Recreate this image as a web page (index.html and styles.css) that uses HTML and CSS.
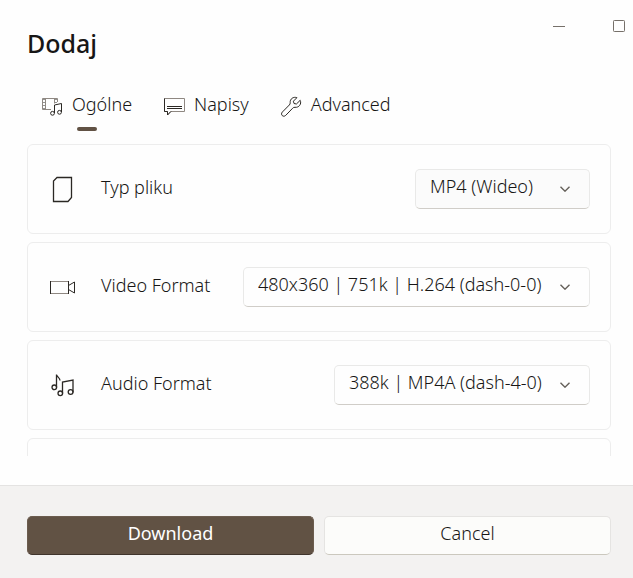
FILE: index.html
```html
<!DOCTYPE html>
<html lang="pl">
<head>
<meta charset="utf-8">
<meta name="viewport" content="width=device-width, initial-scale=1">
<title>Dodaj</title>
<link rel="stylesheet" href="styles.css">
</head>
<body>
<header class="header">
  <h1 class="title">Dodaj</h1>
  <div class="window-controls">
    <button class="window-button" type="button" aria-label="Minimize">
      <svg width="12" height="12" viewBox="0 0 12 12"><path d="M0 6.5h12"/></svg>
    </button>
    <button class="window-button" type="button" aria-label="Maximize">
      <svg width="12" height="12" viewBox="0 0 12 12"><rect x=".5" y=".5" width="11" height="11" rx=".8"/></svg>
    </button>
  </div>
</header>
<nav class="tabs" role="tablist">
  <button class="tab tab-active" type="button" role="tab" aria-selected="true">
    <svg class="icon" width="22" height="20" viewBox="0 0 22 20">
      <path class="soft" d="M9 13.500H.5v-11h15V6M3.500 2.500v11M12.500 2.500v5"/>
      <path class="dots" d="M2 3v10M14 3v4"/>
      <path d="M12.500 17V9l7-1.500V16"/>
      <circle cx="10.500" cy="17.300" r="1.900"/><circle cx="17.500" cy="16.300" r="1.900"/>
    </svg>
    <span>Ogólne</span>
  </button>
  <button class="tab" type="button" role="tab" aria-selected="false">
    <svg class="icon" width="22" height="20" viewBox="0 0 22 20">
      <path class="soft" d="M.5 2.500h20v13h-14l-3 3.500v-3.500h-3z"/>
      <path d="M.5 2.500v13h3V19l3.500-3.500"/>
      <path d="M3 10.500h15M3 12.500h15"/>
    </svg>
    <span>Napisy</span>
  </button>
  <button class="tab" type="button" role="tab" aria-selected="false">
    <svg class="icon" width="22" height="22" viewBox="0 0 22 22">
      <path d="M15.900 1.700C12.500.3 8.700 3 9.200 6.700c.1 1-.2 1.600-.9 2.300L1.500 15.900c-2.600 2.500.6 5.900 3.200 3.500l7-7.200c.6-.7 1.300-1 2.300-.9 4 .5 6.800-3.400 5.200-7l-3.800 3.700-2.400-.5-.6-2.300z"/>
    </svg>
    <span>Advanced</span>
  </button>
</nav>
<main class="settings">
  <section class="card">
    <svg class="card-icon" width="26" height="28" viewBox="0 0 26 28"><path class="firm" d="M7 2.500h14.500v20l-3.500 4H3.500V6z"/></svg>
    <label class="card-label" for="file-type">Typ pliku</label>
    <span class="picker">
      <select class="picker-select picker-primary" id="file-type"><option>MP4 (Wideo)</option></select>
      <svg class="chevron" width="10" height="6" viewBox="0 0 10 6"><path d="M.5.7 5 5.200 9.500.7"/></svg>
    </span>
  </section>
  <section class="card">
    <svg class="card-icon" width="26" height="28" viewBox="0 0 26 28"><path class="soft" d="M.5 8.500h18v12H.5z"/><path d="M.5 8v13M18.500 8v13M18.500 12.500 24.500 9v11l-6-3.500"/></svg>
    <label class="card-label" for="video-format">Video Format</label>
    <span class="picker">
      <select class="picker-select" id="video-format"><option>480x360 | 751k | H.264 (dash-0-0)</option></select>
      <svg class="chevron" width="10" height="6" viewBox="0 0 10 6"><path d="M.5.7 5 5.200 9.500.7"/></svg>
    </span>
  </section>
  <section class="card">
    <svg class="card-icon" width="26" height="28" viewBox="0 0 26 28">
      <path class="firm" d="M6.500 16.500v-13c.3 2.500 3.500 3 3.500 6M12.500 22.500V11l10.500-2v12.500"/>
      <circle class="firm" cx="4.300" cy="16.300" r="2.300"/><circle class="firm" cx="10.300" cy="22.300" r="2.300"/><circle class="firm" cx="20.600" cy="21" r="2.400"/>
    </svg>
    <label class="card-label" for="audio-format">Audio Format</label>
    <span class="picker">
      <select class="picker-select" id="audio-format"><option>388k | MP4A (dash-4-0)</option></select>
      <svg class="chevron" width="10" height="6" viewBox="0 0 10 6"><path d="M.5.7 5 5.200 9.500.7"/></svg>
    </span>
  </section>
  <section class="card"></section>
</main>
<footer class="footer">
  <button class="action action-primary" type="button">Download</button>
  <button class="action" type="button">Cancel</button>
</footer>
</body>
</html>
```
FILE: styles.css
```css
* {
  box-sizing: border-box;
}

body {
  margin: 0;
  height: 100vh;
  display: flex;
  flex-direction: column;
  background: #fefefe;
  color: #171615;
  font: 300 18px/24px "Noto Sans", "Open Sans", sans-serif;
}

button,
select {
  font: inherit;
  color: inherit;
}

svg {
  display: block;
  flex: none;
  fill: none;
  stroke: #2b2824;
}

.soft {
  stroke: #8f8882;
}

.firm {
  stroke-width: 1.3;
}

.dots {
  stroke-dasharray: 1 2;
}

.header {
  display: flex;
  justify-content: space-between;
  padding: 20px 8px 0 27px;
}

.title {
  margin: 7px 0 0;
  font-size: 25px;
  font-weight: 500;
  line-height: 32px;
}

.window-controls {
  display: flex;
  align-items: flex-start;
  gap: 48px;
}

.window-button {
  padding: 0;
  border: 0;
  background: none;
}

.window-button svg {
  stroke: #76706a;
}

.tabs {
  display: flex;
  gap: 32px;
  padding: 33px 22px 13px 42px;
}

.tab {
  position: relative;
  display: flex;
  align-items: flex-start;
  gap: 8px;
  height: 39px;
  padding: 0;
  border: 0;
  background: none;
}

.icon {
  margin-top: 4px;
}

.tab-active::after {
  content: "";
  position: absolute;
  bottom: 0;
  left: calc(50% - 10px);
  width: 20px;
  height: 4px;
  border-radius: 2px;
  background: #615244;
}

.settings {
  flex: 1;
  min-height: 0;
  overflow: hidden;
  margin: 0 22px 29px 27px;
  display: flex;
  flex-direction: column;
  gap: 8px;
}

.card {
  flex: none;
  min-height: 90px;
  display: flex;
  align-items: center;
  padding: 0 20px 0 22px;
  border: 1px solid #ededed;
  border-radius: 6px;
}

.card-label {
  flex: 1;
  margin-left: 25px;
  padding-bottom: 4px;
}

.picker {
  position: relative;
}

.picker-select {
  display: block;
  height: 40px;
  appearance: none;
  padding: 0 47px 6px 14px;
  border: 1px solid #e9e9e8;
  border-bottom-color: #d0cdc8;
  border-radius: 5px;
  background: #fefefe;
}

.picker-primary {
  min-width: 175px;
  background: #fbfbfb;
}

.chevron {
  position: absolute;
  right: 20px;
  top: 17px;
  pointer-events: none;
  stroke: #65605a;
  stroke-width: 1.4;
}

.footer {
  display: flex;
  gap: 10px;
  padding: 30px 22px 23px 27px;
  border-top: 1px solid #e4e3e2;
  background: #f3f2f1;
}

.action {
  flex: 1;
  height: 39px;
  padding: 0 0 5px;
  border: 1px solid #e5e4e2;
  border-bottom-color: #cbc8be;
  border-radius: 5px;
  background: #fcfcfa;
}

.action-primary {
  border-color: #6b5c4e;
  border-bottom-color: #3f342c;
  background: #615244;
  color: #fff;
  font-weight: 400;
}
```
